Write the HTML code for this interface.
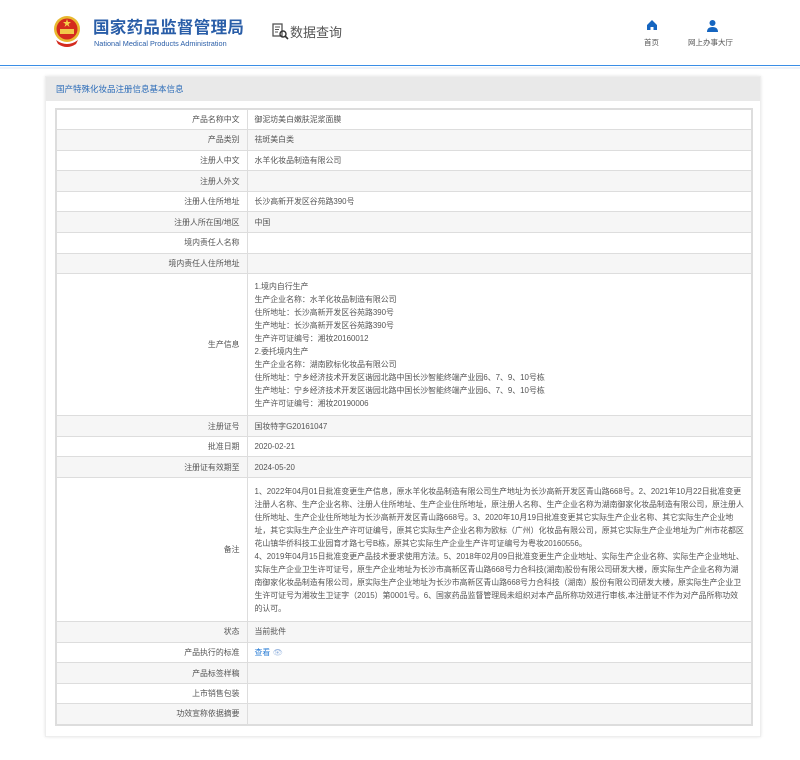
<!DOCTYPE html>
<html><head><meta charset="utf-8"><style>
*{margin:0;padding:0;box-sizing:border-box}
body{width:800px;height:760px;background:#fff;font-family:"Liberation Sans","Noto Sans CJK SC",sans-serif;color:#555;position:relative;overflow:hidden}
.hdr{position:absolute;left:0;top:0;width:800px;height:66px;border-bottom:1px solid #3a8ee6}
.hdr2{position:absolute;left:0;top:67px;width:800px;height:2px;background:#eef3fa}
.emb{position:absolute;left:53px;top:14px;width:28px;height:34px}
.t1{position:absolute;left:93px;top:14px;font-size:16.5px;font-weight:bold;color:#2a5ea8;letter-spacing:0.3px;white-space:nowrap}
.t2{position:absolute;left:94px;top:39px;font-size:7.3px;color:#2a5ea8;white-space:nowrap}
.dq{position:absolute;left:290px;top:22px;font-size:13px;color:#555}
.nav{position:absolute;top:37px;font-size:7.5px;color:#555}
.panel{position:absolute;left:45px;top:76px;width:716px;height:661px;border:1px solid #eee;box-shadow:0 0 3px #e4e4e4;background:#fff}
.ptitle{height:24px;background:#e9e9e9;font-size:8.5px;color:#2a6bb8;line-height:24px;padding-left:10px}
table{position:absolute;left:9px;top:31px;width:698px;border-collapse:collapse;border:2px solid #ddd;font-size:7.9px}
td{border:1px solid #ddd;padding:0 7px;height:20.6px;vertical-align:middle}
td.l{width:191px;text-align:right;color:#555}
tr:nth-child(even) td{background:#f6f6f6}
.ml{line-height:13px;padding-top:3px;padding-bottom:3px}
a{color:#2e7fd6;text-decoration:none}
</style></head><body>
<div class="hdr"></div><div class="hdr2"></div>
<svg class="emb" viewBox="0 0 28 34"><circle cx="14" cy="15" r="13" fill="#e8b830"/><circle cx="14" cy="15" r="10.5" fill="#d42a1e"/><rect x="7" y="15" width="14" height="5" fill="#f1c84a"/><polygon points="14,5 15,8 18,8 15.5,10 16.5,13 14,11 11.5,13 12.5,10 10,8 13,8" fill="#f5d04a"/><path d="M3 26 Q14 34 25 26 L23 30 Q14 36 5 30Z" fill="#d42a1e"/></svg>
<div class="t1">国家药品监督管理局</div>
<div class="t2">National Medical Products Administration</div>
<svg style="position:absolute;left:272px;top:23px" width="17" height="17" viewBox="0 0 17 17"><rect x="1" y="1" width="9" height="12" fill="none" stroke="#555" stroke-width="1.3"/><path d="M3 4h5M3 6.5h4M3 9h3" stroke="#555"/><circle cx="11" cy="11" r="3" fill="none" stroke="#333" stroke-width="1.4"/><path d="M13 13l3 3" stroke="#333" stroke-width="1.6"/></svg>
<div class="dq">数据查询</div>
<svg style="position:absolute;left:646px;top:19px" width="12" height="12" viewBox="0 0 12 12"><path d="M6 1L1 6V11H4.5V8H7.5V11H11V6Z" fill="#1565c0"/></svg>
<div class="nav" style="left:644px">首页</div>
<svg style="position:absolute;left:706px;top:19px" width="13" height="13" viewBox="0 0 13 13"><circle cx="6.5" cy="4" r="3" fill="#1565c0"/><path d="M1 13Q1 8 6.5 8Q12 8 12 13Z" fill="#1565c0"/></svg>
<div class="nav" style="left:688px">网上办事大厅</div>
<div class="panel">
<div class="ptitle">国产特殊化妆品注册信息基本信息</div>
<table>
<tr><td class="l">产品名称中文</td><td>御泥坊美白嫩肤泥浆面膜</td></tr>
<tr><td class="l">产品类别</td><td>祛斑美白类</td></tr>
<tr><td class="l">注册人中文</td><td>水羊化妆品制造有限公司</td></tr>
<tr><td class="l">注册人外文</td><td></td></tr>
<tr><td class="l">注册人住所地址</td><td>长沙高新开发区谷苑路390号</td></tr>
<tr><td class="l">注册人所在国/地区</td><td>中国</td></tr>
<tr><td class="l">境内责任人名称</td><td></td></tr>
<tr><td class="l">境内责任人住所地址</td><td></td></tr>
<tr><td class="l">生产信息</td><td class="ml" style="height:142px">1.境内自行生产<br>生产企业名称：水羊化妆品制造有限公司<br>住所地址：长沙高新开发区谷苑路390号<br>生产地址：长沙高新开发区谷苑路390号<br>生产许可证编号：湘妆20160012<br>2.委托境内生产<br>生产企业名称：湖南欧标化妆品有限公司<br>住所地址：宁乡经济技术开发区谐园北路中国长沙智能终端产业园6、7、9、10号栋<br>生产地址：宁乡经济技术开发区谐园北路中国长沙智能终端产业园6、7、9、10号栋<br>生产许可证编号：湘妆20190006</td></tr>
<tr><td class="l">注册证号</td><td>国妆特字G20161047</td></tr>
<tr><td class="l">批准日期</td><td>2020-02-21</td></tr>
<tr><td class="l">注册证有效期至</td><td>2024-05-20</td></tr>
<tr><td class="l">备注</td><td class="ml" style="height:144px">1、2022年04月01日批准变更生产信息，原水羊化妆品制造有限公司生产地址为长沙高新开发区青山路668号。2、2021年10月22日批准变更注册人名称、生产企业名称、注册人住所地址、生产企业住所地址，原注册人名称、生产企业名称为湖南御家化妆品制造有限公司，原注册人住所地址、生产企业住所地址为长沙高新开发区青山路668号。3、2020年10月19日批准变更其它实际生产企业名称、其它实际生产企业地址，其它实际生产企业生产许可证编号，原其它实际生产企业名称为欧标（广州）化妆品有限公司，原其它实际生产企业地址为广州市花都区花山镇华侨科技工业园育才路七号B栋，原其它实际生产企业生产许可证编号为粤妆20160556。<br>4、2019年04月15日批准变更产品技术要求使用方法。5、2018年02月09日批准变更生产企业地址、实际生产企业名称、实际生产企业地址、实际生产企业卫生许可证号，原生产企业地址为长沙市高新区青山路668号力合科技(湖南)股份有限公司研发大楼，原实际生产企业名称为湖南御家化妆品制造有限公司，原实际生产企业地址为长沙市高新区青山路668号力合科技（湖南）股份有限公司研发大楼，原实际生产企业卫生许可证号为湘妆生卫证字（2015）第0001号。6、国家药品监督管理局未组织对本产品所称功效进行审核,本注册证不作为对产品所称功效的认可。</td></tr>
<tr><td class="l">状态</td><td>当前批件</td></tr>
<tr><td class="l">产品执行的标准</td><td><a>查看</a> <span style="color:#9bb8e0">👁</span></td></tr>
<tr><td class="l">产品标签样稿</td><td></td></tr>
<tr><td class="l">上市销售包装</td><td></td></tr>
<tr><td class="l">功效宣称依据摘要</td><td></td></tr>
</table>
</div>
</body></html>
